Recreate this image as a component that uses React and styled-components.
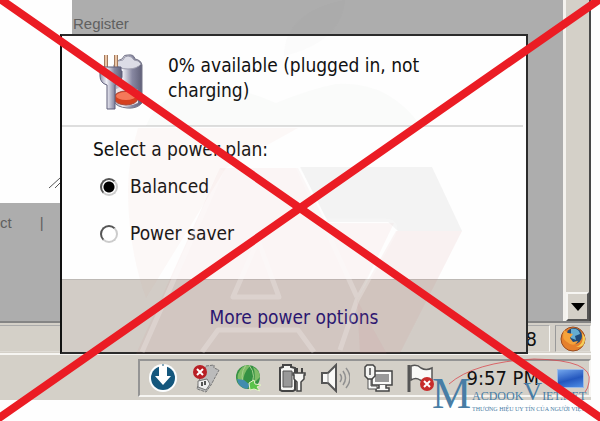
import React, {useState} from "react";
import styled, {createGlobalStyle} from "styled-components"

const GlobalStyle = createGlobalStyle`
  * {
    box-sizing: border-box;
  }

  body {
    margin: 0;
    background: #fefefe;
    color: #111;
    font-family: "DejaVu Sans Condensed", "Noto Sans", sans-serif;
  }
`

const Desktop = styled.main`
  position: relative;
  display: flex;
  flex-direction: column;
  min-height: 100vh;
  overflow: hidden;
`

const BrowserWindow = styled.section`
  display: flex;
  flex: 1;
  padding-right: 9px;
`

const PageArea = styled.div`
  display: grid;
  grid-template-columns: 72px 1fr;
  grid-template-rows: 1fr 118px;
  flex: 1;
  background: #adadad;
  color: #606060;
  font: 15px "Liberation Sans", sans-serif;
`

const TextPanel = styled.div`
  display: flex;
  align-items: flex-end;
  justify-content: flex-end;
  padding: 0 8px 14px 0;
  background: #fefefe;
`

const PageHeading = styled.div`
  padding: 16px 0 0 1px;
  line-height: 16px;
`

const PageFooter = styled.div`
  display: flex;
  grid-column: 1 / -1;
  gap: 28px;
  padding-top: 11px;
`

const ScrollBar = styled.div`
  display: flex;
  align-items: flex-end;
  width: 28px;
  background: #d4d0c8;
  border-left: 3px solid #f4f2ee;
  border-right: 2px solid #484848;
`

const ScrollButton = styled.button`
  display: flex;
  align-items: center;
  justify-content: center;
  width: 100%;
  height: 29px;
  padding: 0;
  background: #d4d0c8;
  border: 2px solid;
  border-color: #f6f5f2 #555 #555 #f6f5f2;
`

const StatusBar = styled.div`
  display: flex;
  justify-content: flex-end;
  gap: 5px;
  height: 34px;
  margin-right: 9px;
  padding: 2px 0 1px;
  background: #d4d0c8;
  border-top: 2px solid #858585;
  border-bottom: 2px solid #f6f5f2;
`

const StatusCell = styled.div`
  display: flex;
  flex: ${({$grow}) => $grow ? 1 : "0 0 36px"};
  align-items: center;
  justify-content: ${({$grow}) => $grow ? "flex-end" : "center"};
  padding-right: ${({$grow}) => $grow ? "12px" : "0"};
  border: 1px solid;
  border-color: #aaa #f6f5f2 #dedbd5 #999;
  border-left-width: ${({$grow}) => $grow ? "0" : "1px"};
  font-size: 20px;
`

const TaskBar = styled.footer`
  display: flex;
  justify-content: flex-end;
  height: 45px;
  margin: 0 9px 21px 0;
  padding: 4px 0 3px;
  background: #d4d0c8;
`

const Tray = styled.div`
  display: flex;
  align-items: center;
  gap: 13px;
  padding: 0 5px 0 8px;
  border: 2px solid;
  border-color: #949494 #f6f5f2 #f6f5f2 #949494;
`

const TrayButton = styled.button`
  display: flex;
  padding: 0;
  background: none;
  border: 0;
`

const Clock = styled.time`
  margin: 0 5px 0 18px;
  font-size: 20px;
  line-height: 24px;
  white-space: nowrap;
`

const ShowDesktop = styled.button`
  width: 27px;
  height: 19px;
  padding: 0;
  background: linear-gradient(165deg, #72a5ec, #2457be 55%, #4e8ee5);
  border: 1px solid #9ab9e6;
`

const Popup = styled.section`
  position: absolute;
  top: 34px;
  right: 72px;
  bottom: 67px;
  left: 60px;
  display: flex;
  flex-direction: column;
  background: #fefefe;
  border: 2px solid #2b2b2b;
  border-left-color: #111;
  font-size: 19px;
  line-height: 25px;
`

const BatteryStatus = styled.header`
  display: flex;
  gap: 22px;
  height: 91px;
  margin-right: 3px;
  padding: 17px 60px 0 36px;
  border-bottom: 2px solid #dedede;

  p {
    margin: 0;
  }

  svg {
    flex: none;
  }
`

const PlanList = styled.fieldset`
  flex: 1;
  margin: 0;
  padding: 10px 31px 0;
  border: 0;
`

const PlanTitle = styled.legend`
  float: left;
  width: 100%;
  margin-bottom: 12px;
  padding: 0;
`

const PlanOption = styled.label`
  display: flex;
  clear: both;
  align-items: center;
  gap: 12px;
  margin-bottom: 22px;
  padding-left: 7px;
`

const PlanRadio = styled.input`
  width: 18px;
  height: 18px;
  margin: 0;
  appearance: none;
  background: ${({checked}) => checked ? "radial-gradient(#000 0 5px, #fff 6px)" : "#fff"};
  border: 2px solid;
  border-color: #555 #ccc #ccc #555;
  border-radius: 50%;
`

const PopupFooter = styled.div`
  display: flex;
  align-items: center;
  justify-content: center;
  height: 73px;
  padding-top: 3px;
  background: #d2ccc6;
  border-top: 1px solid #bdb9b5;
`

const OptionsLink = styled.a`
  color: #1c0f70;
  text-decoration: none;
`

const Overlay = styled.svg`
  position: absolute;
  inset: 0;
  width: 100%;
  height: 100%;
  pointer-events: none;
`

const SiteMark = styled.div`
  position: absolute;
  right: 0;
  bottom: 0;
  width: 170px;
  height: 66px;
  pointer-events: none;
`

const BatteryIcon = () => (
    <svg width="48" height="58" viewBox="0 0 48 58" aria-hidden="true">
        <defs>
            <linearGradient id="metal">
                <stop stopColor="#9696ac"/>
                <stop offset=".3" stopColor="#f0f0f7"/>
                <stop offset=".65" stopColor="#8888a2"/>
                <stop offset="1" stopColor="#606078"/>
            </linearGradient>
        </defs>
        <path d="M16 12q2-5 8-6 2-5 6-4 6-1 7 4 6 1 7 6v38q-5 6-15 5t-13-6z" fill="url(#metal)" stroke="#77778a"/>
        <path d="M17 11q2-4 8-4 1-4 5-4t6 4q5 0 7 4-4 5-13 5t-13-5z" fill="#dcdce6" stroke="#9a9aab"/>
        <path d="M18 36q12-5 22 1v13q-11 5-22 0z" fill="#ebe4e8"/>
        <ellipse cx="28" cy="45" rx="12" ry="7" fill="#d5401f" stroke="#a84737"/>
        <ellipse cx="28" cy="43" rx="10" ry="4" fill="#f4795a"/>
        <path d="M8 2v14M18 2v14" stroke="#a1785d" strokeWidth="4"/>
        <path d="M8 2v13M18 2v13" stroke="#e9c4a5" strokeWidth="2"/>
        <path d="M4 14h19v4h1v6q-1 6-7 8v24H9V32q-7-2-7-9v-5h2z" fill="url(#metal)" stroke="#5f5f7b"/>
    </svg>
)

const trayIcons = [
    {
        name: "Downloads",
        art: <>
            <circle cx="15" cy="15" r="14" fill="#fcfeff"/>
            <circle cx="15" cy="15" r="12" fill="#14577d"/>
            <path d="M11 2h8v11h4l-8 9-8-9h4z" fill="#fff"/>
            <path d="M14 2h2" stroke="#14577d"/>
        </>
    },
    {
        name: "Removable device",
        art: <>
            <path d="M15 3l8-1v3l5 2-8 15-5 7-9-3 3-11z" fill="#bbb" stroke="#777" strokeDasharray="3 1"/>
            <path d="M7 18l9-2 3 5-4 6-8-3z" fill="#eee" stroke="#777"/>
            <path d="M11 19v4M14 18v4" stroke="#555" strokeWidth="2"/>
            <circle cx="9" cy="9" r="7" fill="#b81f25"/>
            <path d="M6 6l6 6m0-6l-6 6" stroke="#fff" strokeWidth="2"/>
        </>
    },
    {
        name: "Network globe",
        art: <>
            <circle cx="14" cy="14" r="12" fill="#359143"/>
            <path d="M4 11Q9 0 16 3q-8 8-7 20Q2 19 4 11M19 4q7 4 7 10l-6 6q2-10-1-16" fill="#80bd68"/>
            <path d="M12 2q-8 11 0 23M15 2q9 11 0 23" fill="none" stroke="#a6d08e"/>
            <path d="M3 16q1 8 10 10l3-4-6-5z" fill="#418cae"/>
            <path d="M15 20l5-3 1 4 6 1-4 2 3 4-6-2-4 1z" fill="#5bc34a" stroke="#e6f1c9"/>
        </>
    },
    {
        name: "Battery",
        art: <>
            <path d="M3 5l3-1V2h8v2l4 1v22l-2 1H5l-2-1z" fill="#f5f5f3" stroke="#444" strokeWidth="2"/>
            <path d="M6 8h9v16H6z" fill="#999" stroke="#555"/>
            <path d="M17 10h11v2h-1v4l-3 3v9h-4v-9l-3-3v-4h-1v-2z" fill="#f8f8f6" stroke="#444" strokeWidth="1.5"/>
            <path d="M20 5v5M25 5v5" stroke="#444" strokeWidth="2"/>
        </>
    },
    {
        name: "Volume",
        art: <>
            <path d="M2 10h6l8-8v26l-8-8H2z" fill="#f9f9f7" stroke="#555" strokeWidth="2"/>
            <path d="M8 10v10" stroke="#888"/>
            <path d="M20 11q3 4 0 8M23 8q5 7 0 14M26 5q8 10 0 20" fill="none" stroke="#909090" strokeWidth="1.5"/>
        </>
    },
    {
        name: "Network",
        art: <>
            <path d="M9 8h20v14H9z" fill="#fafaf8" stroke="#444" strokeWidth="1.5"/>
            <path d="M12 11h14v8H12z" fill="#999"/>
            <path d="M16 22v3h-3v3h13v-3h-3v-3" fill="#fafaf8" stroke="#444" strokeWidth="1.5"/>
            <path d="M5 13v13h9v-3H8V13z" fill="#fafaf8" stroke="#555"/>
            <path d="M2 4l2-2h6l2 2v9l-3 3H5l-3-3z" fill="#f4f4f2" stroke="#444" strokeWidth="1.5"/>
            <path d="M7 5v7" stroke="#777" strokeWidth="2"/>
        </>
    },
    {
        name: "Alerts",
        art: <>
            <path d="M3 2v27" stroke="#555" strokeWidth="3"/>
            <path d="M5 3q6-2 10 2 5 3 11 0v13q-7 2-12-1-4-3-9 0z" fill="#fafaf8" stroke="#555" strokeWidth="1.5"/>
            <circle cx="21" cy="21" r="7" fill="#c72c2b"/>
            <path d="M18 18l6 6m0-6l-6 6" stroke="#fff" strokeWidth="2"/>
        </>
    }
]

const FirefoxIcon = () => (
    <svg width="26" height="26" viewBox="0 0 26 26" aria-label="Firefox">
        <circle cx="13" cy="13" r="12" fill="#e5802c" stroke="#9a4c20"/>
        <circle cx="14" cy="10" r="8" fill="#204a7a"/>
        <path d="M11 3q8-1 9 5l-5 2 1 4-5-2z" fill="#65acd1"/>
        <path d="M4 4l4 3 5 1-3 4 3 4 5-1q-4 7-11 1Q1 13 4 4" fill="#f5a23a"/>
        <path d="M22 7q3 11-6 14 10 1 9-10z" fill="#f5ce58"/>
    </svg>
)

const Backdrop = () => (
    <Overlay viewBox="0 0 600 421" preserveAspectRatio="none" aria-hidden="true">
        <path d="M284 56Q284 12 345 0q-3 42-61 56" fill="#555" opacity=".02"/>
        <path d="M146 126q12-32 54-39 30-4 76 16 34-14 60-19 52-4 85 42z" fill="#8ba87c" opacity=".03"/>
        <path d="M128 190q0-30 10-62h160l-72 40-80 130q-18-50-18-108" fill="#e0a090" opacity=".06"/>
        <path d="M220 168h78l28 55h68l-37 77 30 54H136z" fill="#d08080" opacity=".07"/>
        <path d="M300 167h132l30 64H398l-10-9h-60z" fill="#777" opacity=".08"/>
        <path d="M396 231h66l-62 122h-40l-3-53z" fill="#d08080" opacity=".1"/>
        <g fill="none" stroke="#fff" strokeWidth="5" opacity=".22" strokeLinejoin="round">
            <path d="M222 170L142 352M298 167l59 130M258 240l-25 57h46z"/>
            <path d="M322 221h63q14 1 8 14l-36 65-17 50"/>
            <path d="M202 352l16-22h80l16 22"/>
        </g>
    </Overlay>
)

const Watermark = () => (
    <SiteMark>
        <svg width="170" height="66" viewBox="430 355 170 66" fill="#487da5" fontFamily="Liberation Serif, serif">
            <path d="M449 384Q474 362 534 359q60 1 55 23-1 7-4 10" fill="none" stroke="#d94a50" opacity=".8"/>
            <text x="432" y="408" fontSize="44">M</text>
            <text x="472" y="400" fontSize="12">
                ACDOOK<tspan fontSize="26">V</tspan>IET.NET
            </text>
            <text x="472" y="411" fontSize="6">THƯƠNG HIỆU UY TÍN CỦA NGƯỜI VIỆT</text>
        </svg>
    </SiteMark>
)

const plans = ["Balanced", "Power saver"]

const App = () => {
    const [plan, setPlan] = useState("Balanced")

    return (
        <Desktop>
            <GlobalStyle/>
            <BrowserWindow>
                <PageArea>
                    <TextPanel>
                        <svg width="16" height="12" viewBox="0 0 16 12" aria-hidden="true">
                            <path d="M1 11L12 1M7 11l8-8" stroke="#555"/>
                        </svg>
                    </TextPanel>
                    <PageHeading>Register</PageHeading>
                    <PageFooter><span>ct</span><span>|</span></PageFooter>
                </PageArea>
                <ScrollBar>
                    <ScrollButton aria-label="Scroll down">
                        <svg width="14" height="8"><path d="M0 0h14L7 8z"/></svg>
                    </ScrollButton>
                </ScrollBar>
            </BrowserWindow>
            <StatusBar>
                <StatusCell $grow>8</StatusCell>
                <StatusCell><FirefoxIcon/></StatusCell>
            </StatusBar>
            <TaskBar>
                <Tray>
                    {trayIcons.map(({name, art}) => (
                        <TrayButton key={name} aria-label={name}>
                            <svg width="30" height="30" viewBox="0 0 30 30">{art}</svg>
                        </TrayButton>
                    ))}
                    <Clock>9:57 PM</Clock>
                    <ShowDesktop aria-label="Show desktop"/>
                </Tray>
            </TaskBar>
            <Popup>
                <BatteryStatus>
                    <BatteryIcon/>
                    <p>0% available (plugged in, not charging)</p>
                </BatteryStatus>
                <PlanList>
                    <PlanTitle>Select a power plan:</PlanTitle>
                    {plans.map(name => (
                        <PlanOption key={name}>
                            <PlanRadio
                                type="radio"
                                name="plan"
                                checked={plan === name}
                                onChange={() => setPlan(name)}
                            />
                            {name}
                        </PlanOption>
                    ))}
                </PlanList>
                <PopupFooter>
                    <OptionsLink href="#options">More power options</OptionsLink>
                </PopupFooter>
            </Popup>
            <Backdrop/>
            <Watermark/>
            <Overlay viewBox="0 0 600 421" preserveAspectRatio="none" aria-hidden="true">
                <path d="M3 1L601 418M600-1L-1 418" stroke="#eb1c24" strokeWidth="8" strokeLinecap="round"/>
            </Overlay>
        </Desktop>
    )
}

export default App
